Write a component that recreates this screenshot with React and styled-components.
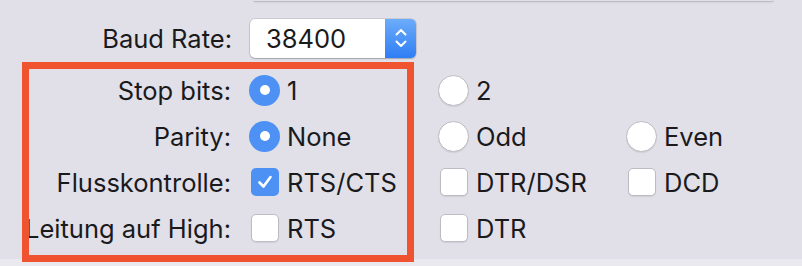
import React from 'react';
import styled, { createGlobalStyle } from 'styled-components';

const GlobalStyle = createGlobalStyle`
  html, body {
    margin: 0;
    padding: 0;
    background: #e1e0e9;
    font-family: Inter, "Liberation Sans", Arial, sans-serif;
    color: #1a1a1c;
    -webkit-font-smoothing: antialiased;
  }
`;

const Page = styled.div`
  position: relative;
  width: 802px;
  height: 266px;
  overflow: hidden;
  background: #e1e0e9;
`;

const TopPanelEdge = styled.div`
  margin-left: 253px;
  width: 521px;
  height: 1px;
  border-bottom: 1px solid #bdbcc5;
  border-radius: 0 0 4px 4px;
  box-shadow: 0 1px 2px rgba(0, 0, 0, 0.06);
`;

const Form = styled.div`
  display: grid;
  grid-template-columns: 249px 189px 188px 1fr;
  grid-auto-rows: 46px;
  align-items: center;
  margin-top: 9px;
`;

const BaudRow = styled.div`
  display: grid;
  grid-template-columns: 250px auto;
  align-items: center;
  height: 40px;
  margin-top: 16px;
`;

const Label = styled.div`
  font-size: 25.5px;
  text-align: right;
  padding-right: 18px;
  white-space: nowrap;
`;

const Popup = styled.div`
  display: flex;
  width: 166px;
  height: 39px;
  border-radius: 5px;
  background: #fff;
  box-shadow: 0 0 0 0.5px rgba(0, 0, 0, 0.18), 0 1px 1.5px rgba(0, 0, 0, 0.2);
  overflow: hidden;
`;

const PopupValue = styled.div`
  flex: 1;
  display: flex;
  align-items: center;
  padding-left: 16px;
  font-size: 25.5px;
`;

const Stepper = styled.div`
  width: 31px;
  display: flex;
  align-items: center;
  justify-content: center;
  background: linear-gradient(#6cacf9, #2f7ef5);
`;

const Option = styled.label`
  display: flex;
  align-items: center;
  gap: 7px;
  font-size: 25.5px;
  white-space: nowrap;
`;

const ControlSlot = styled.span`
  width: 31px;
  height: 31px;
  display: flex;
  align-items: center;
  justify-content: center;
`;

const Radio = styled.span`
  width: 31px;
  height: 31px;
  box-sizing: border-box;
  border-radius: 50%;
  display: flex;
  align-items: center;
  justify-content: center;
  background: ${(p) => (p.checked ? '#4e91f4' : '#fff')};
  border: ${(p) => (p.checked ? 'none' : '1px solid #bcbcc2')};
  box-shadow: ${(p) => (p.checked ? 'none' : '0 1px 1px rgba(0,0,0,0.08)')};

  &::after {
    content: '';
    display: ${(p) => (p.checked ? 'block' : 'none')};
    width: 10px;
    height: 10px;
    border-radius: 50%;
    background: #fff;
  }
`;

const Box = styled.span`
  width: 28px;
  height: 28px;
  box-sizing: border-box;
  border-radius: 5px;
  display: flex;
  align-items: center;
  justify-content: center;
  background: ${(p) => (p.checked ? '#4e91f4' : '#fff')};
  border: ${(p) => (p.checked ? 'none' : '1px solid #bcbcc2')};
  box-shadow: ${(p) => (p.checked ? 'none' : '0 1px 1px rgba(0,0,0,0.08)')};
`;

const Footer = styled.div`
  position: absolute;
  left: 0;
  right: 0;
  bottom: 0;
  height: 7px;
  background: #e9e9ef;
`;

// red annotation frame drawn over the form
const Highlight = styled.div`
  position: absolute;
  left: 22px;
  top: 62px;
  width: 392px;
  height: 200px;
  box-sizing: border-box;
  border: 7px solid #ef5330;
  pointer-events: none;
  z-index: 2;
`;

const Chevrons = () => (
  <svg width="14" height="24" viewBox="0 0 14 24" fill="none">
    <path d="M2.5 8.5 L7 4 L11.5 8.5" stroke="#fff" strokeWidth="2" strokeLinecap="round" strokeLinejoin="round" />
    <path d="M2.5 15.5 L7 20 L11.5 15.5" stroke="#fff" strokeWidth="2" strokeLinecap="round" strokeLinejoin="round" />
  </svg>
);

const Check = () => (
  <svg width="18" height="18" viewBox="0 0 18 18" fill="none">
    <path d="M3.5 9.5 L7.5 13.5 L14.5 4" stroke="#fff" strokeWidth="2.6" strokeLinecap="round" strokeLinejoin="round" />
  </svg>
);

const RadioOption = ({ checked, children }) => (
  <Option>
    <ControlSlot>
      <Radio checked={checked} />
    </ControlSlot>
    {children}
  </Option>
);

const CheckOption = ({ checked, children }) => (
  <Option>
    <ControlSlot>
      <Box checked={checked}>{checked && <Check />}</Box>
    </ControlSlot>
    {children}
  </Option>
);

const App = () => {
  return (
    <Page>
      <GlobalStyle />
      <TopPanelEdge />

      <BaudRow>
        <Label>Baud Rate:</Label>
        <Popup>
          <PopupValue>38400</PopupValue>
          <Stepper>
            <Chevrons />
          </Stepper>
        </Popup>
      </BaudRow>

      <Form>
        <Label>Stop bits:</Label>
        <RadioOption checked>1</RadioOption>
        <RadioOption>2</RadioOption>
        <div />

        <Label>Parity:</Label>
        <RadioOption checked>None</RadioOption>
        <RadioOption>Odd</RadioOption>
        <RadioOption>Even</RadioOption>

        <Label>Flusskontrolle:</Label>
        <CheckOption checked>RTS/CTS</CheckOption>
        <CheckOption>DTR/DSR</CheckOption>
        <CheckOption>DCD</CheckOption>

        <Label>Leitung auf High:</Label>
        <CheckOption>RTS</CheckOption>
        <CheckOption>DTR</CheckOption>
        <div />
      </Form>

      <Footer />
      <Highlight />
    </Page>
  );
};

export default App;
